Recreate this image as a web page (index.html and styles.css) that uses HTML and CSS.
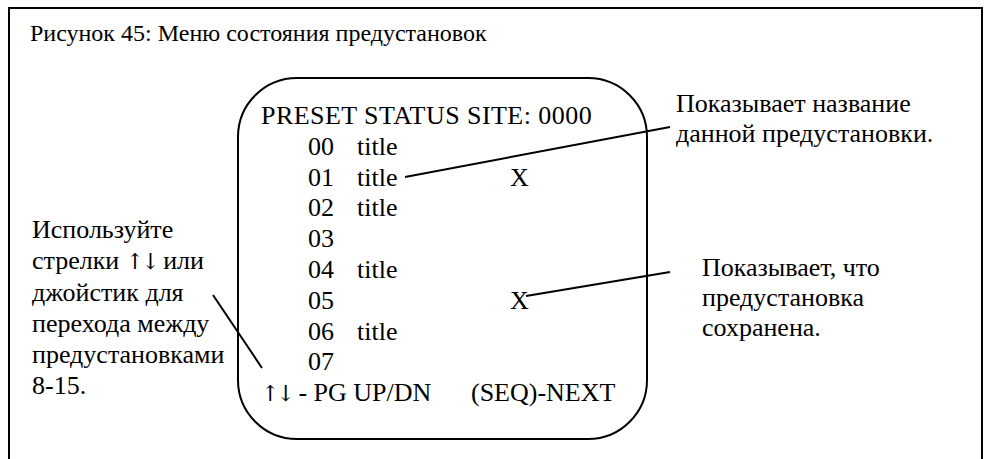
FILE: index.html
```html
<!DOCTYPE html>
<html lang="ru">
<head>
    <meta charset="UTF-8">
    <meta name="viewport" content="width=device-width, initial-scale=1.0">
    <title>Рисунок 45</title>
    <link rel="stylesheet" href="styles.css">
</head>
<body>
    <div class="figure">
        <h1 class="caption">Рисунок 45: Меню состояния предустановок</h1>
        <div class="diagram">
            <div class="note-left">
                Используйте<br>
                стрелки <span class="arrows">↑↓</span> или<br>
                джойстик для<br>
                перехода между<br>
                предустановками<br>
                8-15.
            </div>
            <div class="screen">
                <div class="screen-head">PRESET STATUS SITE: 0000</div>
                <div class="row"><span>00</span><span>title</span><span></span></div>
                <div class="row"><span>01</span><span>title</span><span>X</span></div>
                <div class="row"><span>02</span><span>title</span><span></span></div>
                <div class="row"><span>03</span><span></span><span></span></div>
                <div class="row"><span>04</span><span>title</span><span></span></div>
                <div class="row"><span>05</span><span></span><span>X</span></div>
                <div class="row"><span>06</span><span>title</span><span></span></div>
                <div class="row"><span>07</span><span></span><span></span></div>
                <div class="screen-foot"><span><span class="arrows">↑↓</span> - PG UP/DN</span><span>(SEQ)-NEXT</span></div>
            </div>
            <div class="note-right">
                <div class="note-title">Показывает название<br>данной предустановки.</div>
                <div class="note-saved">Показывает, что<br>предустановка<br>сохранена.</div>
            </div>
        </div>
        <!-- callout lines -->
        <svg class="callouts" width="987" height="459" viewBox="0 0 987 459">
            <line x1="405" y1="177" x2="670" y2="127" />
            <line x1="526" y1="296" x2="670" y2="272" />
            <line x1="213" y1="295" x2="262" y2="368" />
        </svg>
    </div>
</body>
</html>
```

FILE: styles.css
```css
html, body {
    margin: 0;
    overflow: hidden;
}
body {
    font-family: "Liberation Serif", "Times New Roman", serif;
    color: #000;
    background: #fff;
}
.figure {
    position: relative;
    margin: 7px 0 0 8px;
    width: 971px;
    height: 470px;
    border: 2px solid #000;
    border-bottom: none;
}
.caption {
    margin: 0;
    padding: 9px 0 0 20px;
    font-size: 24px;
    font-weight: normal;
    line-height: 30px;
}
.diagram {
    display: flex;
    margin-top: 29px;
}
.note-left {
    width: 205px;
    padding: 137px 0 0 22px;
    font-size: 26px;
    line-height: 31px;
}
.arrows {
    font-family: "DejaVu Serif", serif;
    font-size: 22px;
    letter-spacing: -3px;
}
.screen {
    width: 385px;
    height: 323px;
    padding: 22px 0 14px 22px;
    border: 2px solid #000;
    border-radius: 60px;
    font-size: 26px;
    line-height: 30.8px;
}
.screen-head {
    letter-spacing: 0.45px;
}
.row {
    display: grid;
    grid-template-columns: 49px 153px 1fr;
    padding-left: 47px;
}
.screen-foot {
    display: flex;
}
.screen-foot > span:first-child {
    width: 210px;
}
.note-right {
    display: flex;
    flex-direction: column;
    font-size: 26px;
    line-height: 30px;
}
.note-title {
    padding: 12px 0 0 28px;
}
.note-saved {
    padding: 104px 0 0 54px;
}
.callouts {
    position: absolute;
    left: -10px;
    top: -9px;
    pointer-events: none;
}
.callouts line {
    stroke: #000;
    stroke-width: 2;
}
```
